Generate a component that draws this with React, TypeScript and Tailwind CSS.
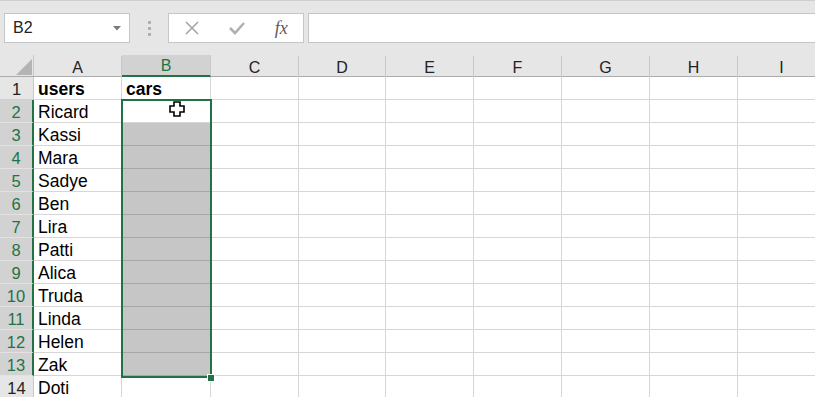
import React from "react";

const cols = ["A", "B", "C", "D", "E", "F", "G", "H", "I"];
const widths = [88, 89, 88, 87, 88, 88, 88, 88, 88];
const names = ["users", "Ricard", "Kassi", "Mara", "Sadye", "Ben", "Lira", "Patti", "Alica", "Truda", "Linda", "Helen", "Zak", "Doti"];

export default function App() {
  return (
    <div className="w-[815px] h-[397px] overflow-hidden bg-white relative" style={{ fontFamily: '"Liberation Sans", Arial, sans-serif' }}>
      {/* Toolbar */}
      <div className="h-[55px] bg-[#e6e6e6] border-t border-[#cfcfcf] flex items-start pt-[12px]">
        <div className="ml-[4px] w-[126px] h-[30px] bg-white border border-[#c6c6c6] flex items-center justify-between pl-[8px] pr-[8px]">
          <span className="text-[16px] text-[#222]">B2</span>
          <svg width="8" height="5" viewBox="0 0 8 5"><polygon points="0,0 8,0 4,4.5" fill="#7a7a7a" /></svg>
        </div>
        <div className="w-[38px] h-[30px] flex flex-col items-center justify-center gap-[3px]">
          <div className="w-[3px] h-[3px] bg-[#b0b0b0]" />
          <div className="w-[3px] h-[3px] bg-[#b0b0b0]" />
          <div className="w-[3px] h-[3px] bg-[#b0b0b0]" />
        </div>
        <div className="w-[136px] h-[30px] bg-white border border-[#c6c6c6] flex items-center">
          <div className="w-[46px] flex justify-center">
            <svg width="16" height="16" viewBox="0 0 16 16"><path d="M2 2 L14 14 M14 2 L2 14" stroke="#a6a6a6" strokeWidth="1.6" fill="none" /></svg>
          </div>
          <div className="w-[46px] flex justify-center">
            <svg width="18" height="16" viewBox="0 0 18 16"><path d="M2 8 L7 13 L16 3" stroke="#b0b0b0" strokeWidth="2.6" fill="none" /></svg>
          </div>
          <div className="w-[44px] flex justify-center">
            <span className="text-[18px] italic text-[#5a5a5a]" style={{ fontFamily: '"Liberation Serif", "Times New Roman", serif' }}>fx</span>
          </div>
        </div>
        <div className="ml-[4px] flex-1 h-[30px] bg-white border border-[#c6c6c6] border-r-0" />
      </div>

      {/* Grid */}
      <div className="relative">
        {/* Header row */}
        <div className="flex h-[22px] bg-[#e6e6e6] border-b border-[#ababab]">
          <div className="w-[34px] shrink-0 relative border-r border-[#c8c8c8]">
            <svg className="absolute left-[16px] top-[4px]" width="16" height="16" viewBox="0 0 16 16"><polygon points="16,0 16,16 0,16" fill="#b4b4b4" /></svg>
          </div>
          {cols.map((c, i) => (
            <div
              key={c}
              style={{ width: widths[i] }}
              className={
                "shrink-0 flex items-center justify-center text-[16px] pt-[2px] " +
                (c === "B"
                  ? "bg-[#d2d2d2] text-[#217346] border-b-2 border-[#217346] border-r border-r-[#c8c8c8] h-[22px]"
                  : "text-[#222] border-r border-[#c8c8c8] h-[21px] mt-[1px]")
              }
            >
              {c}
            </div>
          ))}
        </div>
        {/* Rows */}
        {names.map((n, r) => {
          const row = r + 1;
          const sel = row >= 2 && row <= 13;
          return (
            <div key={row} className="flex h-[23px]">
              <div
                className={
                  "w-[34px] shrink-0 flex items-center justify-center text-[16.5px] pt-[3px] border-b " +
                  (sel
                    ? "bg-[#d2d2d2] text-[#217346] border-r-2 border-r-[#217346] border-b-[#e2e2e2]"
                    : "bg-[#e6e6e6] text-[#222] border-r border-r-[#c8c8c8] border-b-[#d0d0d0]")
                }
              >
                {row}
              </div>
              {cols.map((c, i) => {
                const filled = c === "B" && row >= 3 && row <= 13;
                return (
                  <div
                    key={c}
                    style={{ width: widths[i] }}
                    className={
                      "shrink-0 border-r border-b flex items-end pl-[4px] text-[17.5px] leading-[19px] text-black " +
                      (filled ? "bg-[#c6c6c6] border-[#a8a8a8]" : "border-[#d6d6d6]") +
                      (row === 1 ? " font-bold" : "")
                    }
                  >
                    {c === "A" ? n : c === "B" && row === 1 ? "cars" : ""}
                  </div>
                );
              })}
            </div>
          );
        })}

        {/* Selection overlay */}
        <div className="absolute left-[121px] top-[44px] w-[91px] h-[279px] border-2 border-[#217346] pointer-events-none" />
        <div className="absolute left-[207px] top-[319px] w-[8px] h-[8px] bg-[#217346] border border-white" />

        {/* Cursor */}
        <svg className="absolute left-[169px] top-[46px]" width="16" height="16" viewBox="0 0 16 16">
          <polygon points="5,1 11,1 11,5 15,5 15,11 11,11 11,15 5,15 5,11 1,11 1,5 5,5" fill="white" stroke="black" strokeWidth="1.6" />
        </svg>
      </div>
    </div>
  );
}
